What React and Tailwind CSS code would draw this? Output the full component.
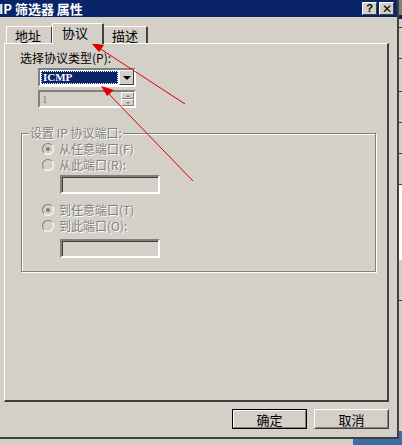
import React from "react";

const font = { fontFamily: '"Noto Sans CJK SC", "Liberation Sans", sans-serif' };

const Radio = ({ checked, label }) => (
  <div className="flex items-center h-[16px] text-[12px] text-[#808080] leading-none">
    <span className="relative w-[12px] h-[12px] rounded-full border border-[#808080] border-r-white border-b-white bg-[#d4d0c8] mr-[5px]">
      {checked && <span className="absolute left-[3px] top-[3px] w-[4px] h-[4px] rounded-full bg-[#808080]" />}
    </span>
    <span className="[text-shadow:1px_1px_0_#fff]">{label}</span>
  </div>
);

const SunkenBox = () => (
  <div className="w-[100px] h-[19px] border-2 border-[#808080] border-r-white border-b-white bg-[#d4d0c8] shadow-[inset_1px_1px_0_#404040]" />
);

const Tab = ({ label, active, className }) => (
  <div
    className={
      (active
        ? "relative z-10 -mb-[1px] h-[21px] bg-[#d4d0c8] border-t border-l border-white border-r-2 border-r-[#404040] rounded-t-[2px] px-[9px] pt-[1px] text-[13px] leading-[16px] "
        : "h-[17px] bg-[#d4d0c8] border-t border-l border-white border-r-2 border-r-[#404040] rounded-t-[2px] px-[8px] pt-[1px] text-[13px] leading-[16px] ") + className
    }
  >
    {label}
  </div>
);

const Arrows = () => (
  <svg className="absolute left-0 top-0 pointer-events-none" width="402" height="445">
    <g stroke="#e00000" strokeWidth="1" fill="#e00000">
      <line x1="185" y1="104" x2="96" y2="46" />
      <polygon points="91,43 104,45 99,52" stroke="none" />
      <line x1="193" y1="181" x2="106" y2="91" />
      <polygon points="101,86 114,90 107,96" stroke="none" />
    </g>
  </svg>
);

export default function App() {
  return (
    <div className="relative w-[402px] h-[445px] overflow-hidden bg-[#d4d0c8] flex flex-col" style={font}>
      <div className="h-[439px] shrink-0 flex">
        <div className="w-[399px] shrink-0 h-[439px] flex flex-col border-r-2 border-b-2 border-r-[#404040] border-b-[#404040]">
          <div className="h-[17px] shrink-0 bg-[#0a246a] flex items-center justify-between pr-[3px]">
            <span className="text-white text-[13px] font-bold leading-none -ml-[1px]">IP 筛选器 属性</span>
            <div className="flex gap-[2px]">
              <div className="w-[15px] h-[13px] bg-[#d4d0c8] border border-white border-r-[#404040] border-b-[#404040] flex items-center justify-center text-[11px] font-bold leading-none text-black" style={{ fontFamily: '"Liberation Sans", sans-serif' }}>?</div>
              <div className="w-[15px] h-[13px] bg-[#d4d0c8] border border-white border-r-[#404040] border-b-[#404040] flex items-center justify-center text-[12px] leading-none text-black" style={{ fontFamily: '"Liberation Sans", sans-serif' }}>✕</div>
            </div>
          </div>

          <div className="flex-1 flex flex-col pl-[4px] pr-[8px] pt-[6px]">
            <div className="flex items-end pl-[2px] h-[20px]">
              <Tab label="地址" className="w-[47px]" />
              <Tab label="协议" active className="w-[52px] -ml-[1px]" />
              <Tab label="描述" className="w-[45px] -ml-[1px]" />
            </div>

            <div className="h-[359px] border-t border-l border-white border-r-2 border-b-2 border-r-[#404040] border-b-[#404040] pl-[15px] pt-[7px]">
              <div className="text-[12px] leading-[14px] text-black">选择协议类型(P):</div>

              <div className="ml-[18px] mt-[3px] w-[98px] h-[19px] border-2 border-[#808080] border-r-white border-b-white bg-white flex">
                <div className="flex-1 m-[1px] bg-[#0a246a] text-white text-[11px] font-bold leading-[13px] pl-[2px] outline-1 outline-dotted outline-white -outline-offset-1" style={{ fontFamily: '"Liberation Serif", serif' }}>ICMP</div>
                <div className="w-[15px] bg-[#d4d0c8] border border-white border-r-[#404040] border-b-[#404040] flex items-center justify-center">
                  <span className="w-0 h-0 border-l-[4px] border-r-[4px] border-t-[4px] border-l-transparent border-r-transparent border-t-black" />
                </div>
              </div>

              <div className="ml-[18px] mt-[3px] w-[98px] h-[18px] border-2 border-[#808080] border-r-white border-b-white bg-[#d4d0c8] flex">
                <div className="flex-1 text-[11px] text-[#808080] leading-[14px] pl-[2px]" style={{ fontFamily: '"Liberation Serif", serif' }}>1</div>
                <div className="w-[13px] flex flex-col">
                  <div className="flex-1 border border-white border-r-[#808080] border-b-[#808080] flex items-center justify-center">
                    <span className="w-0 h-0 border-l-[2px] border-r-[2px] border-b-[2px] border-l-transparent border-r-transparent border-b-[#808080]" />
                  </div>
                  <div className="flex-1 border border-white border-r-[#808080] border-b-[#808080] flex items-center justify-center">
                    <span className="w-0 h-0 border-l-[2px] border-r-[2px] border-t-[2px] border-l-transparent border-r-transparent border-t-[#808080]" />
                  </div>
                </div>
              </div>

              <div className="relative mt-[25px] ml-[1px] w-[355px] h-[139px] border border-[#808080] shadow-[1px_1px_0_#fff,inset_1px_1px_0_#fff] pl-[20px] pt-[7px]">
                <span className="absolute -top-[8px] left-[7px] bg-[#d4d0c8] px-[1px] text-[12px] leading-[13px] text-[#808080] [text-shadow:1px_1px_0_#fff]">设置 IP 协议端口:</span>
                <div className="flex flex-col">
                  <Radio checked label="从任意端口(F)" />
                  <Radio label="从此端口(R):" />
                </div>
                <div className="ml-[18px] mt-[2px]"><SunkenBox /></div>
                <div className="flex flex-col mt-[8px]">
                  <Radio checked label="到任意端口(T)" />
                  <Radio label="到此端口(O):" />
                </div>
                <div className="ml-[18px] mt-[5px]"><SunkenBox /></div>
              </div>
            </div>

            <div className="flex justify-end gap-[7px] mt-[7px]">
              <div className="w-[75px] h-[20px] border border-black flex">
                <div className="flex-1 border border-white border-r-[#808080] border-b-[#808080] flex items-center justify-center text-[13px] leading-none">确定</div>
              </div>
              <div className="w-[75px] h-[20px] border border-white border-r-[#404040] border-b-[#404040] flex">
                <div className="flex-1 border border-transparent border-r-[#808080] border-b-[#808080] flex items-center justify-center text-[13px] leading-none">取消</div>
              </div>
            </div>
          </div>
        </div>

        <div className="flex-1 flex flex-col">
          <div className="h-[15px] bg-[#808080]" />
          <div className="h-[4px] bg-[#0a246a]" />
          <div className="h-[8px]" />
          <div className="h-[1px] bg-[#404040]" />
          <div className="h-[30px]" />
          <div className="h-[1px] bg-[#404040]" />
          <div className="h-[32px]" />
          <div className="h-[1px] bg-[#404040]" />
          <div className="h-[30px]" />
          <div className="h-[1px] bg-[#404040]" />
          <div className="h-[30px]" />
          <div className="h-[1px] bg-[#404040]" />
          <div className="h-[30px]" />
          <div className="h-[1px] bg-[#404040]" />
          <div className="h-[75px] bg-white" />
          <div className="h-[40px]" />
          <div className="h-[1px] bg-[#404040]" />
          <div className="flex-1" />
          <div className="h-[8px] bg-[#3a6ea5]" />
        </div>
      </div>

      <div className="flex-1 flex">
        <div className="w-[353px]" />
        <div className="flex-1 bg-[#3a6ea5]" />
      </div>

      <Arrows />
    </div>
  );
}
